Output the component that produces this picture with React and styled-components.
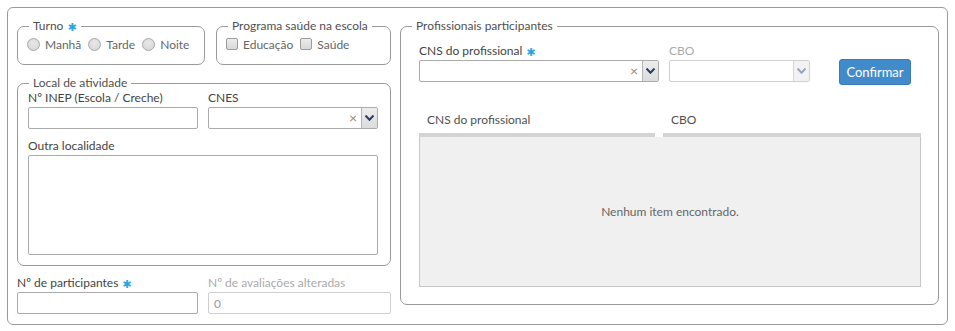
import React from "react";
import styled, { createGlobalStyle } from "styled-components";

const Global = createGlobalStyle`
  html, body { margin: 0; padding: 0; background: #fff; }
  body { font-family: Lato, "Open Sans", sans-serif; font-size: 12px; color: #555; }
  * { box-sizing: border-box; }
`;

const Outer = styled.div`
  margin: 7px 0 0 7px;
  width: 941px;
  border: 1px solid #9a9a9a;
  border-radius: 6px;
  padding: 10px 8px 10px 9px;
  display: flex;
  align-items: flex-start;
  gap: 9px;
`;

const LeftCol = styled.div`
  width: 374px;
  display: flex;
  flex-direction: column;
`;

const TopRow = styled.div`
  display: flex;
  gap: 11px;
`;

const Fieldset = styled.fieldset`
  margin: 0;
  padding: 0;
  min-width: 0;
  border: 1px solid #9a9a9a;
  border-radius: 7px;
  width: ${(p) => p.$w || "auto"};
  flex: ${(p) => (p.$grow ? 1 : "none")};
  margin-top: ${(p) => p.$mt || "0"};
`;

const Legend = styled.legend`
  margin-left: 11px;
  padding: 0 4px;
  height: 16px;
  line-height: 16px;
  font-size: 12px;
  color: #505050;
`;

const Body = styled.div`
  padding: ${(p) => p.$pad};
`;

const OptionRow = styled.div`
  display: flex;
  align-items: center;
  height: 18px;
  gap: 7px;
`;

const Option = styled.label`
  display: inline-flex;
  align-items: center;
  gap: 5px;
  color: #666;
  font-size: 12px;
`;

const Radio = styled.span`
  width: 13px;
  height: 13px;
  border-radius: 50%;
  border: 1px solid #aaa;
  background: radial-gradient(circle at 50% 40%, #e9e9e9 0%, #d2d2d2 100%);
`;

const Check = styled.span`
  width: 12px;
  height: 12px;
  border-radius: 2px;
  border: 1px solid #9c9c9c;
  background: linear-gradient(#ececec, #d8d8d8);
`;

const Grid2 = styled.div`
  display: grid;
  grid-template-columns: ${(p) => p.$cols || "1fr 1fr"};
  column-gap: 10px;
  margin-top: ${(p) => p.$mt || "0"};
`;

const Field = styled.div`
  display: flex;
  flex-direction: column;
  grid-column: ${(p) => (p.$full ? "1 / -1" : "auto")};
  margin-top: ${(p) => p.$mt || "0"};
  width: ${(p) => p.$w || "auto"};
`;

const Label = styled.label`
  height: 14px;
  line-height: 14px;
  margin-bottom: 2px;
  font-size: 12px;
  color: ${(p) => (p.$disabled ? "#aaa" : "#444")};
  white-space: nowrap;
`;

const Req = styled.span`
  display: inline-block;
  line-height: 0;
  color: #2ba6e1;
  font-family: "DejaVu Sans", sans-serif;
  font-size: 11px;
  margin-left: 4px;
  font-weight: bold;
  vertical-align: baseline;
  transform: translateY(1px);
`;

const Input = styled.div`
  height: 22px;
  border: 1px solid ${(p) => (p.$disabled ? "#d0d0d0" : "#ababab")};
  border-radius: 2px;
  background: #fff;
  padding: 0 5px;
  display: flex;
  align-items: center;
  color: #999;
  font-size: 12px;
`;

const TextArea = styled.div`
  height: 100px;
  border: 1px solid #ababab;
  border-radius: 2px;
  background: #fff;
`;

const Select = styled.div`
  height: 22px;
  border: 1px solid ${(p) => (p.$disabled ? "#cfcfcf" : "#ababab")};
  border-radius: 2px;
  background: #fff;
  display: flex;
  align-items: stretch;
  justify-content: flex-end;
`;

const Clear = styled.span`
  display: flex;
  align-items: center;
  padding-right: 4px;
  color: #8a8a8a;
  font-size: 14px;
  line-height: 1;
`;

const ArrowBtn = styled.span`
  width: 16px;
  display: flex;
  align-items: center;
  justify-content: center;
  border-left: 1px solid ${(p) => (p.$disabled ? "#d6d6d6" : "#b5b5b5")};
  background: ${(p) => (p.$disabled ? "#f2f2f2" : "linear-gradient(#ececec, #dcdcdc)")};
`;

const Chevron = ({ color }) => (
  <svg width="9" height="6" viewBox="0 0 9 6">
    <path d="M0.5 0.5 L4.5 4.8 L8.5 0.5" fill="none" stroke={color} strokeWidth="2" />
  </svg>
);

const RightSet = styled(Fieldset)`
  width: 539px;
`;

const FormRow = styled.div`
  display: flex;
  align-items: flex-end;
  gap: 10px;
`;

const Button = styled.button`
  margin-left: 19px;
  margin-bottom: -3px;
  width: 72px;
  height: 26px;
  border: 1px solid #3a7cb8;
  border-radius: 3px;
  background: #428bca;
  color: #fff;
  font-family: Lato, sans-serif;
  font-size: 13px;
  padding: 0;
`;

const TableHead = styled.div`
  display: flex;
  margin-top: 26px;
  gap: 8px;
`;

const HeadCell = styled.div`
  width: ${(p) => p.$w || "auto"};
  flex: ${(p) => (p.$grow ? 1 : "none")};
  height: 29px;
  padding: 5px 8px 0;
  line-height: 14px;
  border-bottom: 4px solid #d4d4d4;
  color: #505050;
  font-size: 12px;
`;

const TableBody = styled.div`
  height: 150px;
  background: #f0f0f0;
  border: 1px solid #c6c6c6;
  border-top: none;
  display: flex;
  align-items: center;
  justify-content: center;
  color: #666;
  font-size: 12px;
`;

export default function App() {
  return (
    <>
      <Global />
      <Outer>
        <LeftCol>
          <TopRow>
            <Fieldset $w="188px">
              <Legend>
                Turno<Req>✱</Req>
              </Legend>
              <Body $pad="1px 9px 11px">
                <OptionRow>
                  <Option><Radio />Manhã</Option>
                  <Option><Radio />Tarde</Option>
                  <Option><Radio />Noite</Option>
                </OptionRow>
              </Body>
            </Fieldset>
            <Fieldset $grow>
              <Legend>Programa saúde na escola</Legend>
              <Body $pad="1px 9px 11px">
                <OptionRow>
                  <Option><Check />Educação</Option>
                  <Option><Check />Saúde</Option>
                </OptionRow>
              </Body>
            </Fieldset>
          </TopRow>

          <Fieldset $mt="10px">
            <Legend>Local de atividade</Legend>
            <Body $pad="0 12px 10px 10px">
              <Grid2>
                <Field>
                  <Label>Nº INEP (Escola / Creche)</Label>
                  <Input />
                </Field>
                <Field>
                  <Label>CNES</Label>
                  <Select>
                    <Clear>×</Clear>
                    <ArrowBtn><Chevron color="#253c6c" /></ArrowBtn>
                  </Select>
                </Field>
                <Field $full $mt="10px">
                  <Label>Outra localidade</Label>
                  <TextArea />
                </Field>
              </Grid2>
            </Body>
          </Fieldset>

          <Grid2 $cols="181px 1fr" $mt="10px">
            <Field>
              <Label>
                Nº de participantes<Req>✱</Req>
              </Label>
              <Input />
            </Field>
            <Field>
              <Label $disabled>Nº de avaliações alteradas</Label>
              <Input $disabled>0</Input>
            </Field>
          </Grid2>
        </LeftCol>

        <RightSet>
          <Legend>Profissionais participantes</Legend>
          <Body $pad="10px 17px 17px 18px">
            <FormRow>
              <Field $w="240px">
                <Label>
                  CNS do profissional<Req>✱</Req>
                </Label>
                <Select>
                  <Clear>×</Clear>
                  <ArrowBtn><Chevron color="#253c6c" /></ArrowBtn>
                </Select>
              </Field>
              <Field $w="141px">
                <Label $disabled>CBO</Label>
                <Select $disabled>
                  <ArrowBtn $disabled><Chevron color="#9aa6bd" /></ArrowBtn>
                </Select>
              </Field>
              <Button>Confirmar</Button>
            </FormRow>
            <TableHead>
              <HeadCell $w="236px">CNS do profissional</HeadCell>
              <HeadCell $grow>CBO</HeadCell>
            </TableHead>
            <TableBody>Nenhum item encontrado.</TableBody>
          </Body>
        </RightSet>
      </Outer>
    </>
  );
}
